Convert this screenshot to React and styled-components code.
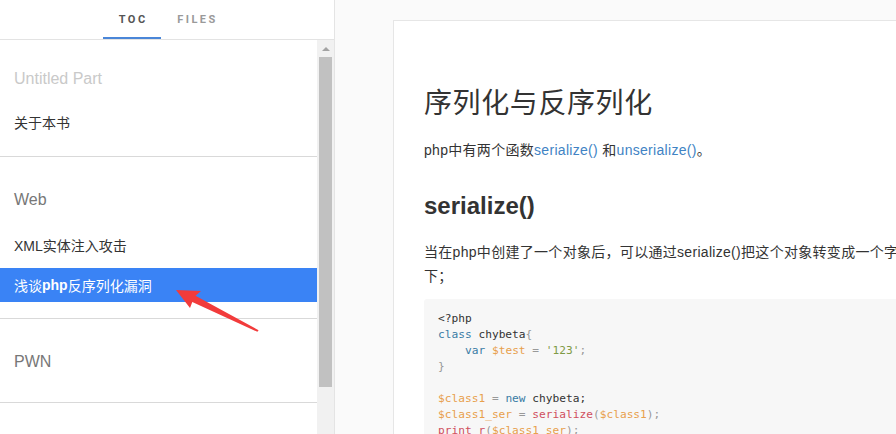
import styled, { createGlobalStyle } from "styled-components";

const GlobalStyle = createGlobalStyle`
  html, body {
    margin: 0;
    padding: 0;
    height: 100%;
    overflow: hidden;
  }
  body {
    font-family: "Liberation Sans", "Noto Sans CJK SC", sans-serif;
    color: #333;
  }
  #root {
    height: 100%;
  }
`;

const parts = [
  {
    title: "Untitled Part",
    muted: true,
    chapters: [{ label: "关于本书" }],
  },
  {
    title: "Web",
    chapters: [
      { label: "XML实体注入攻击" },
      { label: ["浅谈", <b key="b">php</b>, "反序列化漏洞"], active: true },
    ],
  },
  { title: "PWN", chapters: [] },
];

const tones = {
  plain: "#333",
  punct: "#999",
  keyword: "#3a7ca5",
  variable: "#e8a04c",
  string: "#7f9a45",
  func: "#d0505e",
};

// each line is a list of [tone, text]
const code = [
  [["plain", "<?php"]],
  [["keyword", "class"], ["plain", " chybeta"], ["punct", "{"]],
  [["plain", "    "], ["keyword", "var"], ["plain", " "], ["variable", "$test"], ["punct", " = "], ["string", "'123'"], ["punct", ";"]],
  [["punct", "}"]],
  [],
  [["variable", "$class1"], ["punct", " = "], ["keyword", "new"], ["plain", " chybeta;"]],
  [["variable", "$class1_ser"], ["punct", " = "], ["func", "serialize"], ["punct", "("], ["variable", "$class1"], ["punct", ");"]],
  [["func", "print_r"], ["punct", "("], ["variable", "$class1_ser"], ["punct", ");"]],
  [["punct", "?>"]],
];

const App = () => {
  return (
    <>
      <GlobalStyle />
      <Page>
        <Sidebar>
          <TabBar>
            <Tab $active>TOC</Tab>
            <Tab>FILES</Tab>
          </TabBar>
          <SidebarBody>
            <TocList>
              {parts.map((part, i) => (
                <Part key={i}>
                  <PartTitle $muted={part.muted}>{part.title}</PartTitle>
                  {part.chapters.length > 0 && (
                    <ChapterList>
                      {part.chapters.map((ch, j) => (
                        <Chapter key={j} $active={ch.active}>
                          {ch.label}
                        </Chapter>
                      ))}
                    </ChapterList>
                  )}
                </Part>
              ))}
            </TocList>
            <Scrollbar>
              <ScrollArrow>
                <ArrowUp />
              </ScrollArrow>
              <ScrollThumb />
            </Scrollbar>
          </SidebarBody>
        </Sidebar>

        <Main>
          <Card>
            <Title>序列化与反序列化</Title>
            <Para>
              php中有两个函数<Link>serialize()</Link> 和<Link>unserialize()</Link>。
            </Para>
            <SubTitle>serialize()</SubTitle>
            <Para $tight>
              当在php中创建了一个对象后，可以通过serialize()把这个对象转变成一个字符串，以便保存或传输。用法如下；
            </Para>
            <CodeBlock>
              {code.map((line, i) => (
                <CodeLine key={i}>
                  {line.length === 0
                    ? " "
                    : line.map(([tone, text], j) => (
                        <Tok key={j} $tone={tone}>
                          {text}
                        </Tok>
                      ))}
                </CodeLine>
              ))}
            </CodeBlock>
          </Card>
        </Main>

        {/* red annotation arrow drawn over the page */}
        <Annotation viewBox="0 0 896 434" width="896" height="434">
          <polygon
            points="176,290 201,291 195.5,295.8 258.6,330.2 257.4,331.8 192.3,302 190,308"
            fill="#f23b3b"
          />
        </Annotation>
      </Page>
    </>
  );
};
export default App;

const Page = styled.div`
  position: relative;
  display: flex;
  height: 100vh;
  overflow: hidden;
`;

const Sidebar = styled.aside`
  display: flex;
  flex-direction: column;
  width: 334px;
  flex-shrink: 0;
  border-right: 1px solid #e4e4e4;
  background: #fff;
`;

const TabBar = styled.div`
  display: flex;
  justify-content: center;
  height: 39px;
  border-bottom: 1px solid #e3e3e3;
`;

const Tab = styled.div`
  box-sizing: border-box;
  height: 39px;
  padding: 1px 13.5px 0 16px;
  display: flex;
  align-items: center;
  font-family: Roboto, "Liberation Sans", sans-serif;
  font-size: 11px;
  font-weight: 700;
  letter-spacing: 2.5px;
  color: ${(p) => (p.$active ? "#555" : "#9a9a9a")};
  border-bottom: 2px solid ${(p) => (p.$active ? "#4a86d8" : "transparent")};
`;

const SidebarBody = styled.div`
  display: flex;
  flex: 1;
  min-height: 0;
`;

const TocList = styled.div`
  flex: 1;
  overflow: hidden;
`;

const Part = styled.div`
  padding: 26px 0 16px;
  border-bottom: 1px solid #d9d9d9;

  &:first-child {
    padding-top: 22px;
    padding-bottom: 17px;
  }
`;

const PartTitle = styled.div`
  height: 34px;
  display: flex;
  align-items: center;
  padding: 0 14px;
  margin-bottom: 7px;
  font-size: 16px;
  color: ${(p) => (p.$muted ? "#c9c9c9" : "#777")};

  ${Part}:first-child & {
    margin-bottom: 5px;
  }
`;

const ChapterList = styled.div`
  display: flex;
  flex-direction: column;
  gap: 6px;
  padding-top: 4px;
`;

const Chapter = styled.div`
  height: 34px;
  display: flex;
  align-items: center;
  padding: 0 14px;
  font-size: 14px;
  color: ${(p) => (p.$active ? "#fff" : "#333")};
  background: ${(p) => (p.$active ? "#3a83f5" : "transparent")};

  b {
    font-weight: 700;
  }
`;

const Scrollbar = styled.div`
  width: 17px;
  flex-shrink: 0;
  display: flex;
  flex-direction: column;
  background: #f1f1f1;
`;

const ScrollArrow = styled.div`
  height: 17px;
  display: flex;
  align-items: center;
  justify-content: center;
`;

const ArrowUp = styled.span`
  width: 0;
  height: 0;
  border-left: 4px solid transparent;
  border-right: 4px solid transparent;
  border-bottom: 4px solid #a3a3a3;
`;

const ScrollThumb = styled.div`
  height: 330px;
  margin: 0 2px;
  background: #c1c1c1;
`;

const Main = styled.main`
  flex: 1;
  min-width: 0;
  background: #fafafa;
  padding: 20px 0 0 58px;
  overflow: hidden;
`;

const Card = styled.article`
  width: 690px;
  flex-shrink: 0;
  background: #fff;
  border: 1px solid #e6e6e6;
  padding: 64px 30px 40px;
`;

const Title = styled.h1`
  margin: 0 0 20px;
  font-family: "Noto Sans CJK SC", sans-serif;
  font-size: 28px;
  font-weight: 400;
  letter-spacing: 0.6px;
  line-height: 1.2;
  color: #333;
`;

const Para = styled.p`
  margin: 0 0 ${(p) => (p.$tight ? "10px" : "0")};
  font-size: 14px;
  letter-spacing: 0.3px;
  line-height: 1.7;
  color: #333;
`;

const Link = styled.a`
  color: #4183c4;
  text-decoration: none;
`;

const SubTitle = styled.h2`
  margin: 30px 0 20px;
  font-size: 24px;
  font-weight: 700;
  line-height: 1.2;
  color: #333;
`;

const CodeBlock = styled.pre`
  margin: 0;
  padding: 12px 14px;
  background: #f7f7f7;
  border-radius: 3px;
  font-family: "DejaVu Sans Mono", "Liberation Mono", monospace;
  font-size: 11.2px;
  line-height: 16px;
`;

const CodeLine = styled.div`
  white-space: pre;
`;

const Tok = styled.span`
  color: ${(p) => tones[p.$tone]};
`;

const Annotation = styled.svg`
  position: absolute;
  left: 0;
  top: 0;
  pointer-events: none;
`;
